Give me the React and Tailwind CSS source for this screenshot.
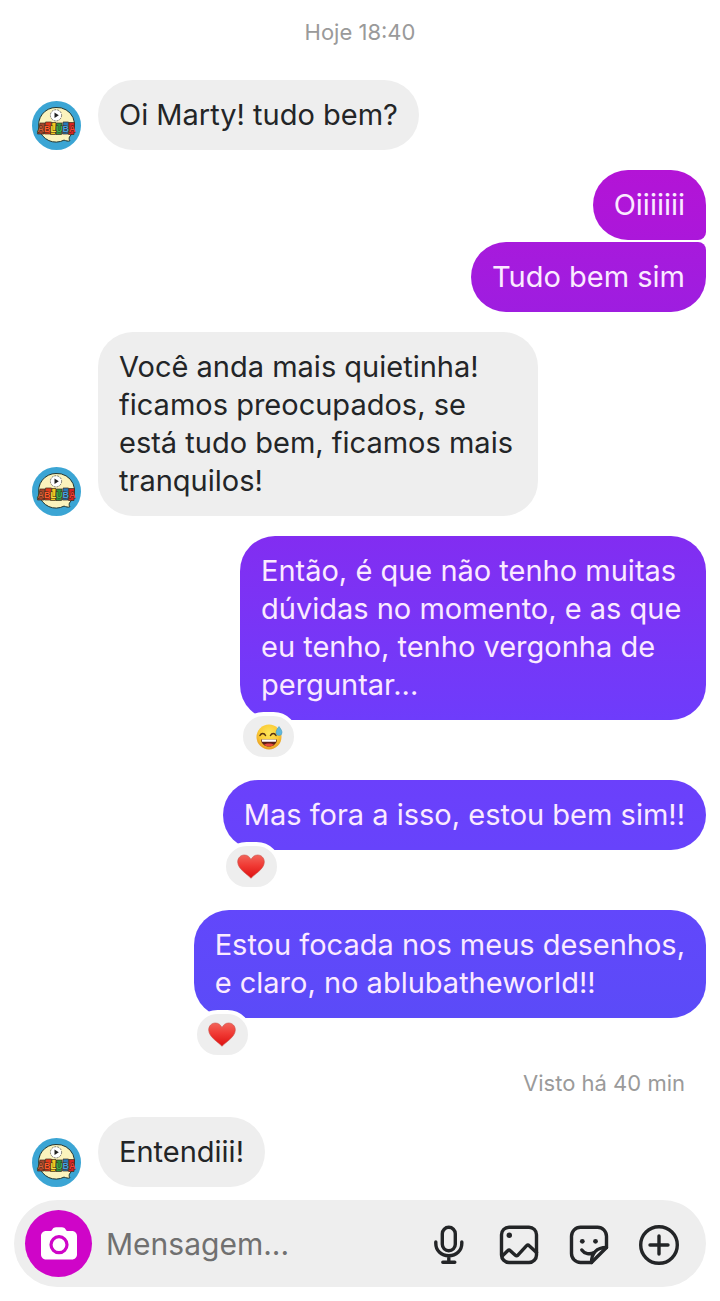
import React from 'react';

const messages = [
  { from: 'them', lines: ['Oi Marty! tudo bem?'], space: 'mt-9' },
  {
    from: 'me',
    lines: ['Oiiiiiii'],
    space: 'mt-5',
    look: 'from-[#b314d6] to-[#ab17da] rounded-[35px] rounded-br-lg',
  },
  {
    from: 'me',
    lines: ['Tudo bem sim'],
    space: 'mt-0.5',
    look: 'from-[#a71adc] to-[#9e1de0] rounded-[35px] rounded-tr-lg',
  },
  {
    from: 'them',
    lines: ['Você anda mais quietinha!', 'ficamos preocupados, se', 'está tudo bem, ficamos mais', 'tranquilos!'],
    space: 'mt-5',
    look: 'min-w-[440px]',
  },
  {
    from: 'me',
    lines: ['Então, é que não tenho muitas', 'dúvidas no momento, e as que', 'eu tenho, tenho vergonha de', 'perguntar...'],
    space: 'mt-5',
    look: 'from-[#822df1] to-[#6e3cfb] rounded-[35px] min-w-[466px]',
    reaction: 'sweat',
  },
  {
    from: 'me',
    lines: ['Mas fora a isso, estou bem sim!!'],
    space: 'mt-15',
    look: 'from-[#6b40fb] to-[#6743fb] rounded-[35px]',
    reaction: 'heart',
  },
  {
    from: 'me',
    lines: ['Estou focada nos meus desenhos,', 'e claro, no ablubatheworld!!'],
    space: 'mt-15',
    look: 'from-[#6247fb] to-[#5b4bf8] rounded-[35px]',
    reaction: 'heart',
  },
];

function Avatar() {
  return (
    <svg viewBox="0 0 49 49" className="size-[49px] shrink-0" role="img" aria-label="Abluba">
      <circle cx="24.5" cy="24.5" r="24.5" fill="#3ba5d4" />
      <path d="M24 6.5a17.3 17.3 0 1 0 8 32.6c2 .6 4 1.6 6 .6-1-1-1-2-.6-3.6A17.3 17.3 0 0 0 24 6.5z" fill="#fbf3bd" stroke="#26362f" strokeWidth="1" />
      <circle cx="24" cy="14.3" r="5.6" fill="#fff" stroke="#555" strokeWidth=".8" strokeDasharray="2 1" />
      <path d="M22.5 11.6v5.4l4.3-2.7z" fill="#222" />
      {/* blocos coloridos atrás do nome */}
      <g stroke="#3a2a1a" strokeWidth=".7">
        <path d="M8 22l5 0-1 11-6.500 0z" fill="#a8452a" />
        <path d="M13.500 21h6l-1 12h-6z" fill="#e03a1c" />
        <path d="M20 21.500h4l-.5 12h-5z" fill="#f2c81d" />
        <path d="M24.500 22h5.500l-.5 11.500H24z" fill="#2c9440" />
        <path d="M31 21h5.500l-.5 12h-5.500z" fill="#2a78b8" />
        <path d="M37 21.500h5.500l-.5 12h-5.500z" fill="#d62323" />
      </g>
      <text x="5.500" y="30.500" fontFamily="Liberation Sans" fontWeight="700" fontSize="9" stroke="#3a2a1a" strokeWidth=".8" paintOrder="stroke">
        <tspan fill="#d8623a">A</tspan>
        <tspan fill="#ff5a2c">B</tspan>
        <tspan fill="#ffe23d">L</tspan>
        <tspan fill="#3fb550">U</tspan>
        <tspan fill="#45a0e0">B</tspan>
        <tspan fill="#ff3b33">A</tspan>
      </text>
    </svg>
  );
}

function Heart() {
  return (
    <svg viewBox="0 0 28 25" className="w-7">
      <defs>
        <linearGradient id="heart" x1="0" y1="0" x2="0" y2="1">
          <stop offset="0" stopColor="#f2645a" />
          <stop offset=".45" stopColor="#f03a34" />
          <stop offset="1" stopColor="#dd1010" />
        </linearGradient>
      </defs>
      <path
        d="M14 24.3C11 20.5 1 15.5.7 8.3.5 4 3.6 1 7.3 1c3 0 5.4 1.7 6.7 4.6C15.3 2.7 17.7 1 20.7 1c3.7 0 6.8 3 6.6 7.3C27 15.5 17 20.5 14 24.3z"
        fill="url(#heart)"
        stroke="#c9504a"
        strokeWidth=".6"
      />
    </svg>
  );
}

function SweatSmile() {
  return (
    <svg viewBox="0 0 28 28" className="w-7">
      <defs>
        <radialGradient id="face" cx=".5" cy=".35" r=".65">
          <stop offset="0" stopColor="#fde75a" />
          <stop offset=".6" stopColor="#fbcb35" />
          <stop offset="1" stopColor="#e79a22" />
        </radialGradient>
      </defs>
      <circle cx="14" cy="14" r="12.5" fill="url(#face)" />
      <path d="M5 12.5c1.2-2.7 4.3-2.7 5.5 0M15.5 12.5c1.2-2.7 4.3-2.7 5.5 0" fill="none" stroke="#5a3512" strokeWidth="1.5" strokeLinecap="round" />
      <path d="M6 16.5h16c-.3 4.3-3.5 7-8 7s-7.7-2.7-8-7z" fill="#5b1f16" />
      <path d="M6.7 16.5h14.6l-.4 2.3H7.1z" fill="#fff" />
      <path d="M9 21.7c2.5-1.7 7.5-1.7 10 0-1.3 1.2-3 1.7-5 1.7s-3.7-.5-5-1.7z" fill="#e8483c" />
      <path d="M24 3.5c2 2.7 3 4.3 3 6a3 3 0 0 1-6 0c0-1.7 1-3.3 3-6z" fill="#62b8dc" stroke="#3e93bb" strokeWidth=".5" />
    </svg>
  );
}

function Received({ lines, space, look = '' }) {
  return (
    <div className={`flex items-end gap-[17px] pl-[18px] ${space}`}>
      <Avatar />
      <Bubble lines={lines} look={`bg-[#eeeeee] text-[#232527] rounded-[35px] ${look}`} />
    </div>
  );
}

function Sent({ lines, space, look, reaction }) {
  return (
    <div className={`flex justify-end ${space}`}>
      <div className="relative">
        <Bubble lines={lines} look={`bg-linear-to-b text-[#fbeaff] ${look}`} />
        {reaction && (
          <span className="absolute -left-px -bottom-[41px] flex h-[49px] w-[59px] items-center justify-center rounded-full border-4 border-white bg-[#eeeeee]">
            {reaction === 'heart' ? <Heart /> : <SweatSmile />}
          </span>
        )}
      </div>
    </div>
  );
}

function Bubble({ lines, look }) {
  return (
    <p className={`px-[21px] py-4 text-[29px] leading-[38px] ${look}`}>
      {lines.map((line) => (
        <span key={line} className="block">{line}</span>
      ))}
    </p>
  );
}

function Composer() {
  return (
    <form className="mt-[13px] flex h-[87px] items-center rounded-full bg-[#eeeeee] pr-[27px] pl-[11px]" onSubmit={(e) => e.preventDefault()}>
      <button type="button" aria-label="Câmera" className="flex size-[67px] shrink-0 items-center justify-center rounded-full bg-[#cf05c8]">
        <svg viewBox="0 0 36 33" className="w-9">
          <path d="M11.5 2.2C12.3 1 13.500.3 15 .3h6c1.500 0 2.700.7 3.500 1.900l1.300 1.900H31c2.800 0 5 2.200 5 5v18.500c0 2.800-2.200 5-5 5H5c-2.800 0-5-2.200-5-5V9.100c0-2.800 2.200-5 5-5h5.200z" fill="#fff" />
          <circle cx="18" cy="17.700" r="8" fill="none" stroke="#cf05c8" strokeWidth="3.200" />
        </svg>
      </button>
      <input
        type="text"
        aria-label="Mensagem"
        placeholder="Mensagem..."
        className="ml-3.5 min-w-0 flex-1 bg-transparent text-[30px] leading-[38px] outline-none placeholder:text-[#707070]"
      />
      <div className="flex shrink-0 gap-[30px] text-[#232527]">
        <IconButton label="Gravar áudio">
          <rect x="13.3" y="2.3" width="13" height="23.5" rx="6.500" />
          <path d="M6.8 17v1.500c0 7 5.500 12.300 13 12.300s13-5.300 13-12.300V17M19.800 31v6M13.800 37.300h12" />
        </IconButton>
        <IconButton label="Galeria">
          <rect x="2.5" y="2.2" width="35" height="35.3" rx="7.500" />
          <path d="M3.5 30.700l5.200-5q1.300-1.200 2.600 0l5 4.500q1.300 1.200 2.600 0l8.700-9.500q1.300-1.300 2.600 0l7.300 6.800" />
          <circle cx="10.3" cy="10.3" r="2.7" fill="currentColor" stroke="none" />
        </IconButton>
        <IconButton label="Figurinhas">
          <path d="M22.5 37.500H11.500a9 9 0 0 1-9-9V11.200a9 9 0 0 1 9-9h17a9 9 0 0 1 9 9v11.300z" />
          <path d="M22.5 37.500C22.500 28.500 27.500 22.500 37.500 22.500M12.800 25c2.700 3.800 8 5 12.400 2.500" />
          <circle cx="13.3" cy="16.3" r="2.4" fill="currentColor" stroke="none" />
          <circle cx="26.5" cy="16.3" r="2.4" fill="currentColor" stroke="none" />
        </IconButton>
        <IconButton label="Mais">
          <circle cx="20" cy="20" r="18.3" />
          <path d="M20 11v18M11 20h18" />
        </IconButton>
      </div>
    </form>
  );
}

function IconButton({ label, children }) {
  return (
    <button type="button" aria-label={label} className="mt-0.5">
      <svg viewBox="0 0 40 40" className="size-10" fill="none" stroke="currentColor" strokeWidth="3.4" strokeLinecap="round" strokeLinejoin="round">
        {children}
      </svg>
    </button>
  );
}

export default function App() {
  return (
    <main className="bg-white px-3.5 pt-5 pb-3.5 font-['Inter',sans-serif]">
      <p className="text-center text-[22px] leading-6 text-[#9a9a9a]">Hoje 18:40</p>

      {messages.map((msg) =>
        msg.from === 'me' ? <Sent key={msg.lines[0]} {...msg} /> : <Received key={msg.lines[0]} {...msg} />
      )}

      <p className="mt-[53px] pr-[21px] text-right text-[22px] leading-6 text-[#9a9a9a]">Visto há 40 min</p>

      <Received lines={['Entendiii!']} space="mt-[22px]" />

      <Composer />
    </main>
  );
}
